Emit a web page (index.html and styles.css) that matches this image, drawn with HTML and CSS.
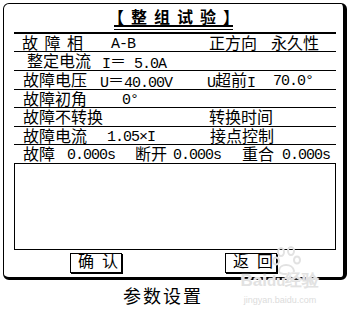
FILE: index.html
```html
<!DOCTYPE html>
<html lang="zh">
<head>
<meta charset="utf-8">
<link rel="stylesheet" href="styles.css">
</head>
<body>
<div class="frame">
  <div class="title-line">
    <div class="u1"><div class="u2"><div class="title">【整组试验<span class="last">】</span></div></div></div>
  </div>
  <div class="rows">
    <div class="row r1"><span class="spaced">故障相</span><span class="n">A-B</span><span>正方向</span><span>永久性</span></div>
    <div class="row t r2"><span>整定电流</span><span><span class="n">I</span>＝<span class="n"> 5.0A</span></span></div>
    <div class="row t r3"><span>故障电压</span><span><span class="n">U</span>＝<span class="n">40.00V</span></span><span><span class="n">U</span>超前<span class="n">I</span></span><span class="n">70.0°</span></div>
    <div class="row r4"><span>故障初角</span><span class="n">0°</span></div>
    <div class="row t r5"><span>故障不转换</span><span>转换时间</span></div>
    <div class="row r6"><span>故障电流</span><span class="n">1.05×I</span><span>接点控制</span></div>
    <div class="row r7"><span>故障</span><span class="n">0.000s</span><span>断开</span><span class="n">0.000s</span><span>重合</span><span class="n">0.000s</span></div>
  </div>
  <div class="box"></div>
  <div class="btns"><span class="btn">确 认</span><span class="btn">返 回</span></div>
</div>
<div class="caption">参数设置</div>
<svg class="paw" width="34" height="30" viewBox="0 0 34 30" aria-hidden="true">
  <g fill="none" stroke="#e2e2e2" stroke-width="2">
    <ellipse cx="9" cy="6" rx="3" ry="4"/>
    <ellipse cx="19" cy="5" rx="3" ry="4"/>
    <ellipse cx="4" cy="15" rx="3" ry="3.5"/>
    <ellipse cx="25" cy="14" rx="3" ry="3.5"/>
    <path d="M7 25 C7 17 21 17 22 25 C22 29 7 29 7 25 Z"/>
  </g>
</svg>
<div class="wm"><span class="wm-big">Bai<span class="wm-du">du</span>经验</span><span class="wm-small">jingyan.baidu.com</span></div>
</body>
</html>
```
FILE: styles.css
```css
html, body {
  margin: 0;
  padding: 0;
  background: #fff;
}
body {
  position: relative;
  width: 352px;
  height: 312px;
  overflow: hidden;
  font-family: "Noto Sans CJK SC", sans-serif;
  font-size: 16px;
  color: #000;
}
.frame {
  box-sizing: border-box;
  margin: 3px 0 0 3px;
  width: 344px;
  height: 277px;
  border-style: solid;
  border-color: #000;
  border-width: 1px 4px 3px 1px;
  border-radius: 6px;
}
.title-line {
  text-align: center;
  height: 23px;
}
.u1 {
  display: inline-block;
  border-bottom: 1px solid #000;
  padding-bottom: 2px;
}
.u2 {
  border-bottom: 2px solid #000;
}
.title {
  margin: 0 -6px;
  height: 18px;
  line-height: 18px;
  font-weight: 700;
  letter-spacing: 7px;
  white-space: nowrap;
}
.title .last {
  letter-spacing: 0;
}
.rows {
  margin: 5px 0 0 10px;
  width: 322px;
  border-top: 2px solid #000;
}
.row {
  display: grid;
  height: 16px;
  line-height: 16px;
  padding-bottom: 1px;
  border-bottom: 1px solid #000;
  padding-left: 9px;
  white-space: nowrap;
}
.row.t {
  height: 17px;
  line-height: 17px;
}
.r1 { padding-left: 8px; grid-template-columns: 89px 98px 62px auto; }
.r2 { padding-left: 13px; grid-template-columns: 75px auto; }
.r3 { grid-template-columns: 77px 107px 66px auto; }
.r4 { grid-template-columns: 99px auto; }
.r5 { grid-template-columns: 186px auto; }
.r6 { grid-template-columns: 84px 103px auto; }
.r7 {
  height: 17px;
  line-height: 17px;
  border-bottom: none;
  grid-template-columns: 44px 68px 38px 69px 40px auto;
}
.spaced {
  letter-spacing: 6.5px;
}
.n {
  font-family: "Liberation Mono", "Noto Sans CJK SC", monospace;
  font-size: 15px;
  letter-spacing: -1px;
  white-space: pre;
  vertical-align: -1px;
}
.row > .n {
  padding-top: 4px;
  line-height: 13px;
}
.box {
  box-sizing: border-box;
  margin-left: 10px;
  width: 322px;
  height: 87px;
  border: 1px solid #000;
}
.btns {
  display: flex;
  margin-top: 3px;
  padding-left: 66px;
  gap: 103px;
}
.btn {
  box-sizing: border-box;
  width: 52px;
  height: 20px;
  line-height: 18px;
  border: 1px solid #000;
  box-shadow: 1px 1px 0 #000;
  padding-left: 7px;
  font-family: "Liberation Mono", "Noto Sans CJK SC", monospace;
  word-spacing: -1.6px;
  white-space: pre;
  overflow: hidden;
}
.caption {
  margin-top: 5px;
  padding-left: 123px;
  font-size: 18px;
  line-height: 20px;
  letter-spacing: 2px;
}
.paw {
  position: absolute;
  left: 272px;
  top: 246px;
}
.wm {
  position: absolute;
  left: 234px;
  top: 271px;
  width: 92px;
  color: #d8d8d8;
  font-family: "Liberation Sans", sans-serif;
  text-align: center;
}
.wm-big {
  display: block;
  font-size: 17px;
  font-weight: 700;
  line-height: 20px;
  color: #e2e2e2;
  text-shadow: 0 0 1px #fff, 0 0 1px #fff;
}
.wm-du {
  font-size: 15px;
}
.wm-small {
  display: block;
  font-size: 9px;
  line-height: 12px;
  margin-top: 3px;
  color: #dcdcdc;
}
```
